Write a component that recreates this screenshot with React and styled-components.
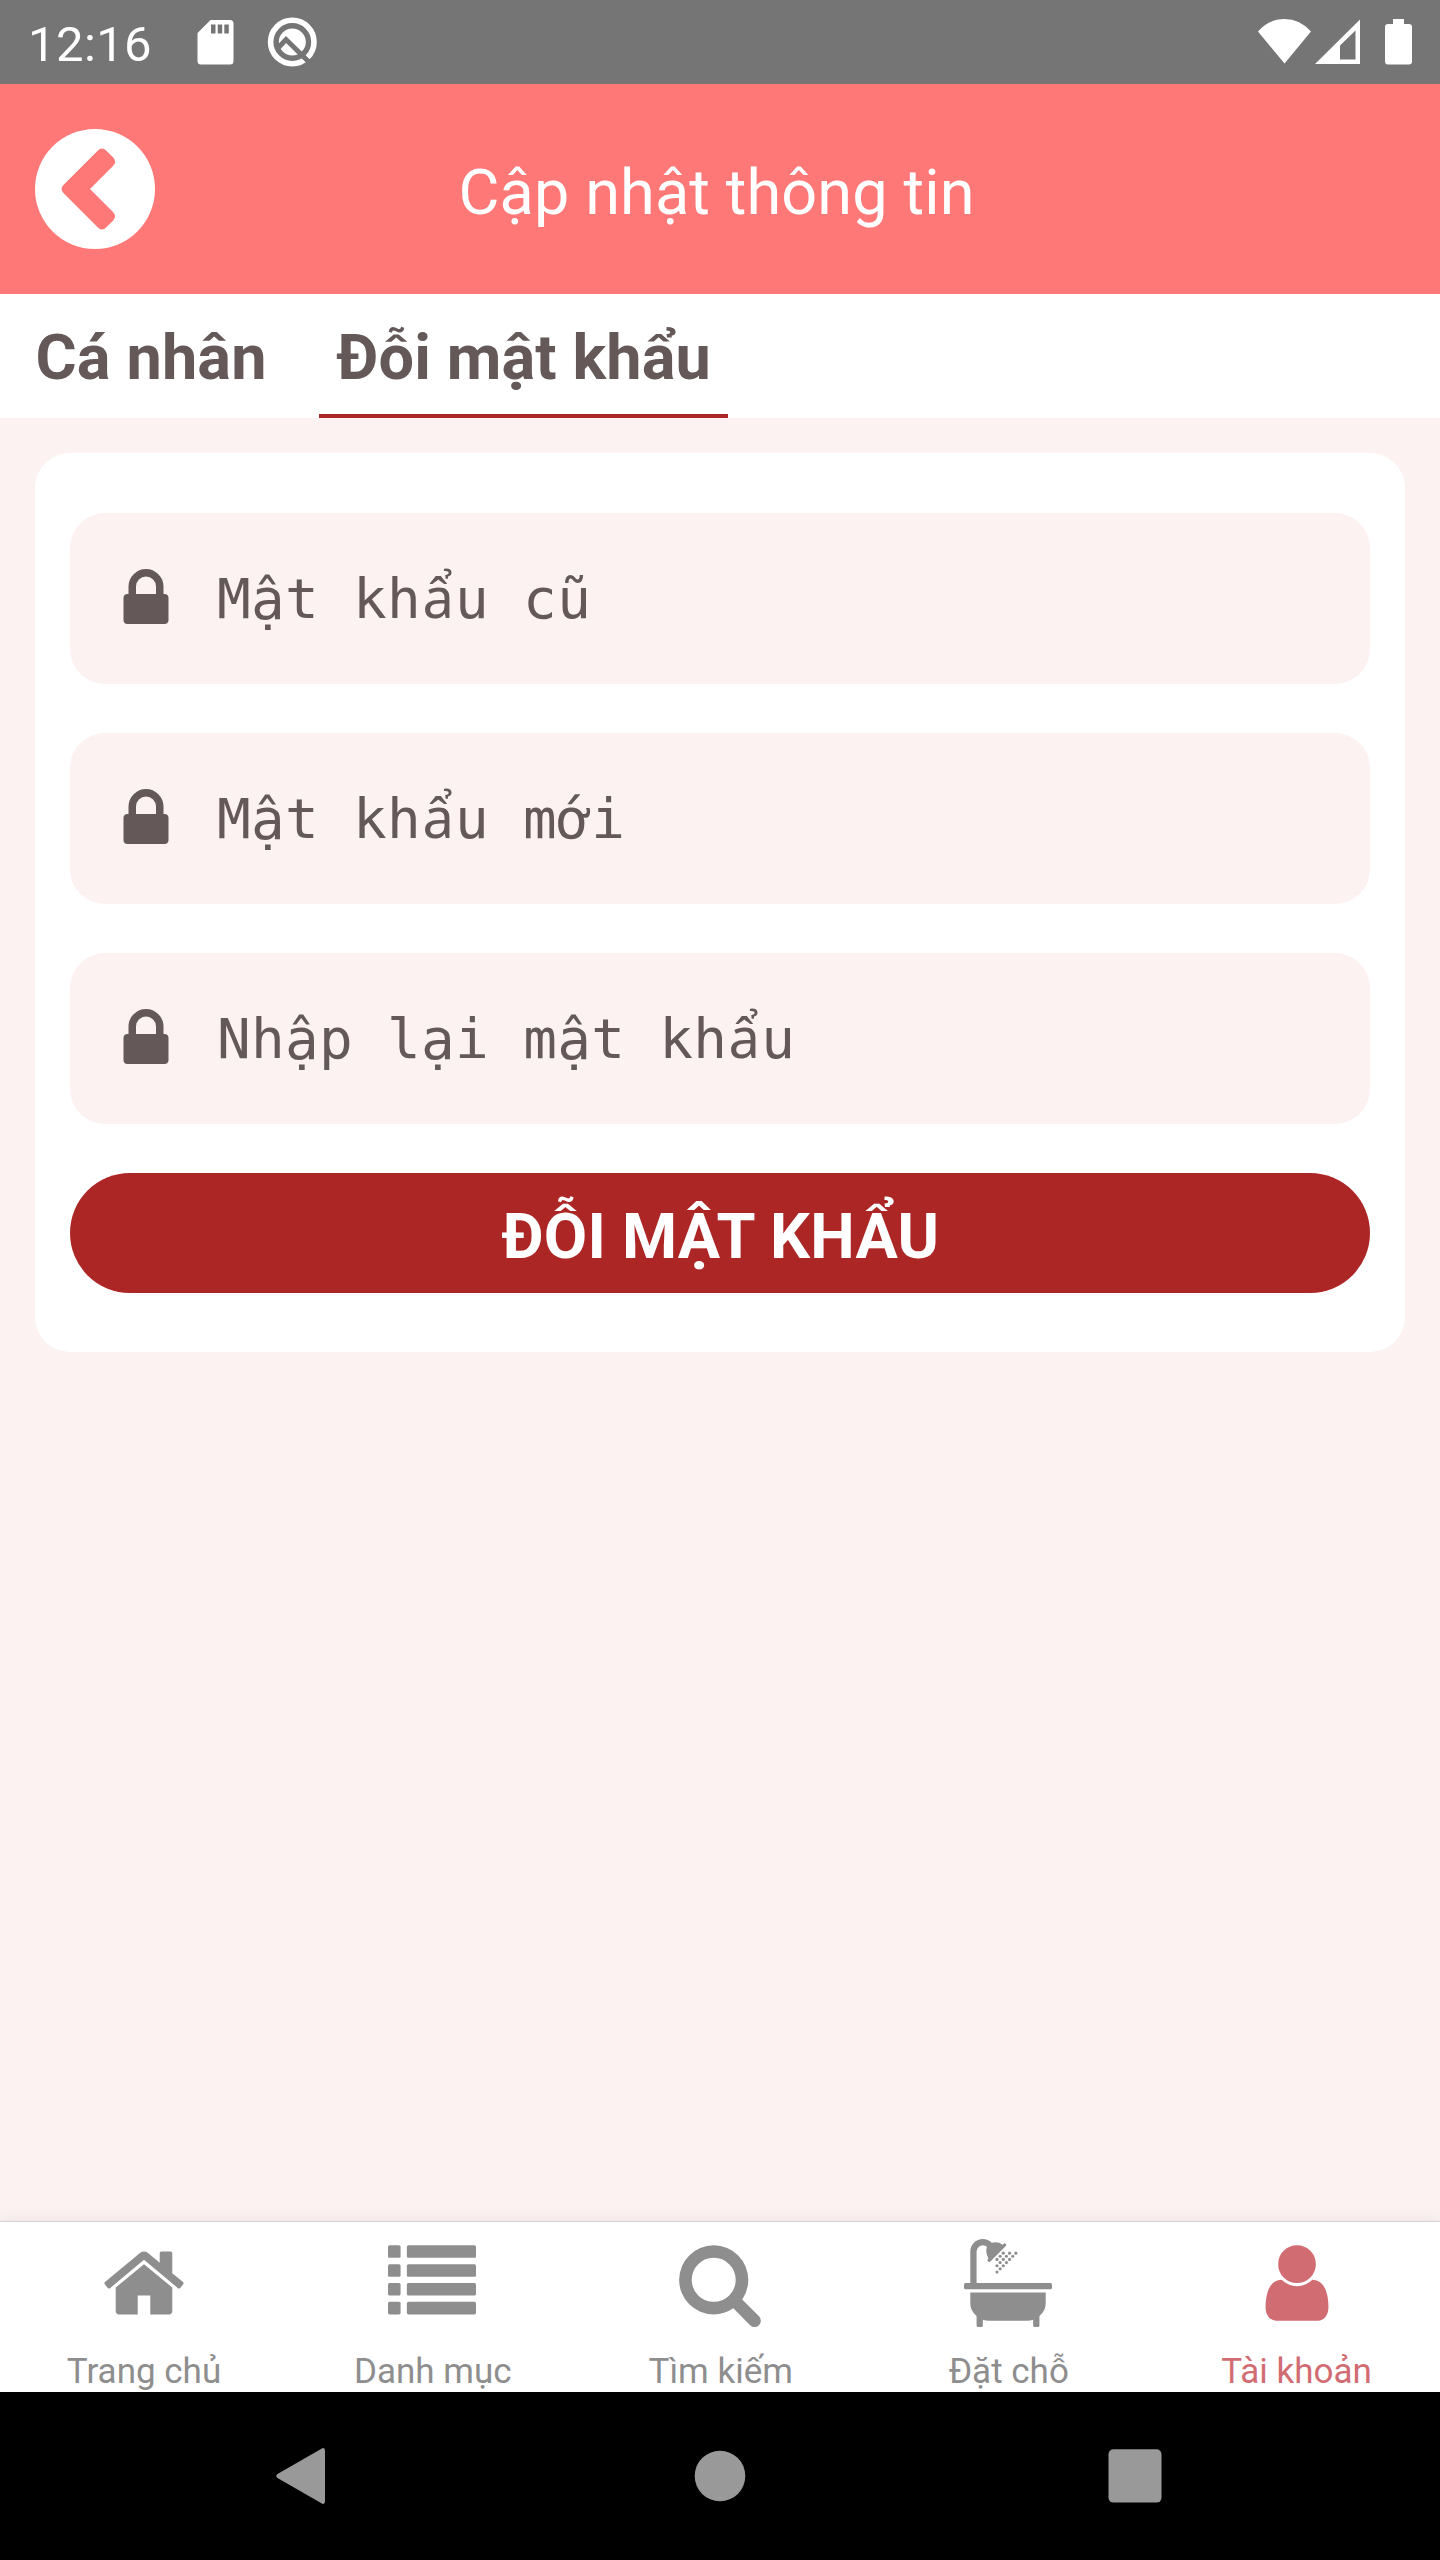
import React from "react";
import styled, { createGlobalStyle } from "styled-components";

const c = {
  status: "#757575",
  brand: "#ff7878",
  ink: "#655858",
  tint: "#fcf2f1",
  accent: "#ad2626",
  muted: "#8e8e8e",
  active: "#d16c73",
};

const Global = createGlobalStyle`
  * { box-sizing: border-box; }
  body { margin: 0; font-family: Roboto, "Noto Sans", sans-serif; }
  button { font: inherit; border: 0; padding: 0; background: none; color: inherit; }
`;

const Screen = styled.div`
  width: 1440px;
  height: 2560px;
  display: flex;
  flex-direction: column;
  overflow: hidden;
  background: ${c.tint};
`;

const StatusBar = styled.div`
  flex: none;
  height: 84px;
  display: flex;
  align-items: center;
  padding-left: 28px;
  background: ${c.status};
  color: #fff;
`;

const Clock = styled.span`
  width: 168px;
  font-size: 49px;
  letter-spacing: 0.4px;
  line-height: 84px;
  padding-top: 5px;
`;

const StatusIcon = styled.svg`
  display: block;
  flex: none;
  width: ${(p) => p.$w}px;
  height: 84px;
  fill: #fff;
`;

const Spacer = styled.div`
  flex: 1;
`;

const Header = styled.header`
  flex: none;
  height: 210px;
  display: grid;
  grid-template-columns: 120px 1fr 120px;
  align-items: center;
  padding: 0 35px;
  background: ${c.brand};
`;

const BackButton = styled.button`
  width: 120px;
  height: 120px;
  border-radius: 50%;
  background: #fff;

  svg {
    display: block;
    fill: ${c.brand};
  }
`;

const Title = styled.h1`
  margin: 0;
  padding: 8px 7px 0 0;
  text-align: center;
  font-size: 63px;
  font-weight: 400;
  letter-spacing: 0.12px;
  line-height: 74px;
  color: #fff;
`;

const Tabs = styled.nav`
  flex: none;
  height: 124px;
  display: flex;
  padding-left: 18px;
  gap: 35px;
  background: #fff;
`;

const Tab = styled.button`
  padding: 7px 17.5px 0;
  border-bottom: 4px solid ${(p) => (p.$on ? c.accent : "transparent")};
  font-size: 63px;
  font-weight: 700;
  letter-spacing: 0.12px;
  white-space: nowrap;
  color: ${c.ink};
`;

const Main = styled.main`
  flex: 1;
  padding: 35px;
`;

const Card = styled.form`
  display: flex;
  flex-direction: column;
  gap: 49px;
  padding: 60px 35px 59px;
  border-radius: 35px;
  background: #fff;
`;

const Field = styled.label`
  height: 171px;
  display: flex;
  align-items: center;
  padding-left: 40.5px;
  gap: 36.5px;
  border-radius: 35px;
  background: ${c.tint};
`;

const Glyph = styled.svg`
  display: block;
  flex: none;
  width: ${(p) => p.$size}px;
  height: ${(p) => p.$size}px;
  fill: currentColor;
  color: ${c.ink};
`;

const FieldText = styled.span`
  font-family: "DejaVu Sans Mono", monospace;
  font-size: 56px;
  letter-spacing: 0.3px;
  line-height: 66px;
  color: ${c.ink};
`;

/* Keeps the stacked accent inside one monospaced cell. */
const AccentCell = styled.span`
  display: inline-block;
  width: 34px;
  text-align: center;
  letter-spacing: 0;
  font-family: "Noto Sans", sans-serif;
  line-height: 1;
`;

const Submit = styled.button`
  height: 120px;
  border-radius: 60px;
  background: ${c.accent};
  color: #fff;
  font-size: 63px;
  font-weight: 700;
  letter-spacing: 0.2px;
  line-height: 74px;
  padding: 8px 0 0 1px;
`;

const BottomNav = styled.nav`
  flex: none;
  height: 171px;
  display: grid;
  grid-template-columns: repeat(5, 1fr);
  border-top: 1px solid #d6d3d4;
  background: #fff;
  box-shadow: 0 -1px 14px rgba(80, 60, 60, 0.08);
`;

const NavItem = styled.button`
  display: flex;
  flex-direction: column;
  align-items: center;
  justify-content: flex-start;
  padding-top: 17px;
  color: ${(p) => (p.$on ? c.active : c.muted)};

  svg {
    color: inherit;
  }

  & + & span {
    margin-left: 1.5px;
  }

  &:last-child {
    padding-left: 1px;
  }
`;

const NavLabel = styled.span`
  margin-top: 24px;
  font-size: 35px;
  line-height: 41px;
`;

const SystemBar = styled.div`
  flex: none;
  height: 168px;
  background: #000;

  svg {
    display: block;
    fill: #999;
  }
`;

const LOCK =
  "M640 768h512v-192q0-106-75-181t-181-75-181 75-75 181v192zm832 96v576q0 40-28 68t-68 28h-960q-40 0-68-28t-28-68v-576q0-40 28-68t68-28h32v-192q0-184 132-316t316-132 316 132 132 316v192h32q40 0 68 28t28 68z";
const HOME =
  "M1472 992v480q0 26-19 45t-45 19h-384v-384h-256v384h-384q-26 0-45-19t-19-45v-480q0-1 .5-3t.5-3l575-474 575 474q1 2 1 6zm223-69l-62 74q-8 9-21 11h-3q-13 0-21-7l-692-577-692 577q-12 8-24 7-13-2-21-11l-62-74q-8-10-7-23.5t11-21.5l719-599q32-26 76-26t76 26l244 204v-195q0-14 9-23t23-9h192q14 0 23 9t9 23v408l219 182q10 8 11 21.5t-7 23.5z";
const SEARCH =
  "M1216 832q0-185-131.5-316.5t-316.5-131.5-316.5 131.5-131.5 316.5 131.5 316.5 316.5 131.5 316.5-131.5 131.5-316.5zm512 832q0 52-38 90t-90 38q-54 0-90-38l-343-342q-179 124-399 124-143 0-273.5-55.5t-225-150-150-225-55.5-273.5 55.5-273.5 150-225 225-150 273.5-55.5 273.5 55.5 225 150 150 225 55.5 273.5q0 220-124 399l343 343q37 37 37 90z";
const USER =
  "M1536 1399q0 109-62.5 187t-150.5 78h-854q-88 0-150.5-78t-62.5-187q0-85 8.5-160.5t31.5-152 58.5-131 94-89 134.5-34.5q131 128 313 128t313-128q76 0 134.5 34.5t94 89 58.5 131 31.5 152 8.5 160.5zm-256-887q0 159-112.5 271.5t-271.5 112.5-271.5-112.5-112.5-271.5 112.5-271.5 271.5-112.5 271.5 112.5 112.5 271.5z";

const ListShapes = () =>
  [128, 512, 896, 1280].map((y) => (
    <React.Fragment key={y}>
      <rect x="0" y={y} width="256" height="256" rx="32" />
      <rect x="384" y={y} width="1408" height="256" rx="32" />
    </React.Fragment>
  ));

const DROPS = [
  [12.5, 4.5], [14.5, 4.5], [16.5, 4.5],
  [11.5, 5.5], [13.5, 5.5], [15.5, 5.5],
  [10.5, 6.5], [12.5, 6.5], [14.5, 6.5],
  [11.5, 7.5], [13.5, 7.5],
  [10.5, 8.5], [12.5, 8.5],
  [11.5, 9.5], [10.5, 10.5],
];

const BathShapes = () => (
  <g transform="scale(64)">
    <path d="M2 14.5V4A4 4 0 0 1 6 0Q7.6 0 8.8 1.2Q10.8 .7 12.3 1.8L12.7 1.4Q13 1.2 13.2 1.5L13.4 1.7Q13.6 2 13.3 2.2L8.3 7.2Q8 7.4 7.8 7.2L7.5 6.9Q7.3 6.7 7.6 6.4L7.8 6.2Q6.7 4.3 7.3 2.5Q6.8 2 6 2A2 2 0 0 0 4 4V14.5Z" />
    <rect x="0" y="14" width="28" height="2" rx=".5" />
    <path d="M2 17H26V20.5Q26 22.8 24 24.5V27.5Q24 28 23.5 28H22.5Q22 28 22 27.5V25.7Q21.2 26 20 26H8Q6.8 26 6 25.7V27.5Q6 28 5.5 28H4.5Q4 28 4 27.5V24.5Q2 22.8 2 20.5Z" />
    {DROPS.map(([x, y]) => (
      <circle key={`${x}-${y}`} cx={x} cy={y} r=".5" />
    ))}
  </g>
);

const fields = ["Mật khẩu cũ", "Mật khẩu mới", "Nhập lại mật khẩu"];

const monospaced = (text) =>
  text
    .split(/(ẩ)/)
    .map((part, i) => (part === "ẩ" ? <AccentCell key={i}>{part}</AccentCell> : part));

const items = [
  { label: "Trang chủ", icon: <path d={HOME} /> },
  { label: "Danh mục", icon: <ListShapes /> },
  { label: "Tìm kiếm", icon: <path d={SEARCH} /> },
  { label: "Đặt chỗ", icon: <BathShapes /> },
  { label: "Tài khoản", icon: <path d={USER} />, on: true },
];

export default function App() {
  return (
    <Screen>
      <Global />
      <StatusBar>
        <Clock>12:16</Clock>
        <StatusIcon $w={130} viewBox="196 0 130 84">
          <path
            fillRule="evenodd"
            d="M210.5 20H230Q233.500 20 233.500 23.500V61Q233.500 64.500 230 64.500H201Q197.500 64.500 197.500 61V33ZM211 24.500V33.500H215.500V24.500ZM217.700 24.500V33.500H222.200V24.500ZM224.300 24.500V33.500H228.800V24.500Z"
          />
          <circle cx="292.300" cy="42" r="21.700" fill="none" stroke="#fff" strokeWidth="5.600" />
          <circle cx="292.300" cy="42" r="13.500" />
          <path d="M278 48L286 39.500L313 66" fill="none" stroke={c.status} strokeWidth="5" />
        </StatusIcon>
        <Spacer />
        <StatusIcon $w={190} viewBox="1250 0 190 84">
          <path d="M1258 31.500Q1269 19 1284.500 19T1311 31.500L1284.500 63.500Z" />
          <path fillRule="evenodd" d="M1315 64L1360 19.500V64ZM1340 45.500V59.500H1355.500V30.500Z" />
          <path d="M1393 19H1404V24H1409Q1412 24 1412 27V61.500Q1412 64.500 1409 64.500H1388Q1385 64.500 1385 61.500V27Q1385 24 1388 24H1393Z" />
        </StatusIcon>
      </StatusBar>

      <Header>
        <BackButton type="button" aria-label="Quay lại">
          <svg width="120" height="120" viewBox="105 387 360 360">
            <path d="M191 554L293 452Q306 439 319 452L339 472Q352 485 339 498L270 567L339 636Q352 649 339 662L319 682Q306 695 293 682L191 580Q178 567 191 554Z" />
          </svg>
        </BackButton>
        <Title>Cập nhật thông tin</Title>
      </Header>

      <Tabs>
        <Tab type="button">Cá nhân</Tab>
        <Tab type="button" $on>Đỗi mật khẩu</Tab>
      </Tabs>

      <Main>
        <Card>
          {fields.map((text) => (
            <Field key={text}>
              <Glyph $size={70} viewBox="0 0 1792 1792">
                <path d={LOCK} />
              </Glyph>
              <FieldText>{monospaced(text)}</FieldText>
            </Field>
          ))}
          <Submit type="button">ĐỖI MẬT KHẨU</Submit>
        </Card>
      </Main>

      <BottomNav>
        {items.map((item) => (
          <NavItem key={item.label} type="button" $on={item.on}>
            <Glyph $size={88} viewBox="0 0 1792 1792">
              {item.icon}
            </Glyph>
            <NavLabel>{item.label}</NavLabel>
          </NavItem>
        ))}
      </BottomNav>

      <SystemBar>
        <svg width="1440" height="168" viewBox="0 2392 1440 168">
          <path d="M277.500 2474L321 2449Q325 2446.500 325 2451V2501Q325 2505.500 321 2503L277.500 2478Q275 2476 277.500 2474Z" />
          <circle cx="720" cy="2476" r="25.300" />
          <rect x="1108.500" y="2449.300" width="53" height="53.300" rx="5" />
        </svg>
      </SystemBar>
    </Screen>
  );
}
